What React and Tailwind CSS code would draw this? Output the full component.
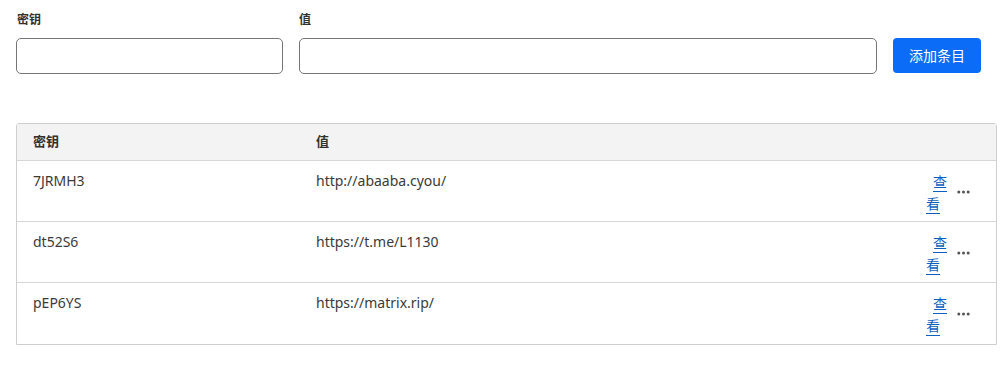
import React from 'react';

const rows = [
  { key: '7JRMH3', value: 'http://abaaba.cyou/' },
  { key: 'dt52S6', value: 'https://t.me/L1130' },
  { key: 'pEP6YS', value: 'https://matrix.rip/' },
];

const font = { fontFamily: '"Noto Sans", "Noto Sans CJK SC", sans-serif' };

function MoreIcon() {
  return (
    <svg width="13" height="4" viewBox="0 0 13 4" className="fill-[#555]">
      <circle cx="1.8" cy="2" r="1.5" />
      <circle cx="6.5" cy="2" r="1.5" />
      <circle cx="11.2" cy="2" r="1.5" />
    </svg>
  );
}

function App() {
  return (
    <div className="bg-white w-[1001px] h-[380px] text-[#323130]" style={font}>
      <div className="flex items-end pt-[12px] pl-[16px]">
        <div className="flex flex-col w-[267px]">
          <label className="text-[12px] font-semibold leading-[16px] mb-[10px] pl-px">密钥</label>
          <input className="h-[36px] border border-[#767676] rounded-[5px] px-2 outline-none" />
        </div>
        <div className="flex flex-col w-[578px] ml-[16px]">
          <label className="text-[12px] font-semibold leading-[16px] mb-[10px]">值</label>
          <input className="h-[36px] border border-[#767676] rounded-[5px] px-2 outline-none" />
        </div>
        <button className="ml-[16px] h-[35px] w-[88px] mb-px bg-[#0b6cf7] text-white text-[14px] rounded-[4px]">
          添加条目
        </button>
      </div>

      <div className="mt-[49px] ml-[16px] w-[981px] border border-[#cfcfcf] rounded-t-[3px]">
        <div className="flex h-[37px] items-center bg-[#f3f3f3] border-b border-[#d6d6d6] text-[13px] font-semibold">
          <div className="w-[283px] pl-[16px]">密钥</div>
          <div className="flex-1 pl-[16px]">值</div>
        </div>
        {rows.map((r, i) => (
          <div
            key={r.key}
            className={`flex h-[61px] text-[14px] text-[#3b3a39] ${i < rows.length - 1 ? 'border-b border-[#d6d6d6]' : ''}`}
          >
            <div className="w-[283px] pl-[16px] pt-[9px]">{r.key}</div>
            <div className="flex-1 pl-[16px] pt-[9px]">{r.value}</div>
            <div className="flex items-start pt-[10px] pr-[26px]">
              <a href="#" className="flex flex-col text-[#0f5fc0] text-[14px] leading-[22px]">
                <span className="underline underline-offset-[4px] pl-[7px]">查</span>
                <span className="underline underline-offset-[4px]">看</span>
              </a>
              <span className="ml-[10px] mt-[19px]">
                <MoreIcon />
              </span>
            </div>
          </div>
        ))}
      </div>
    </div>
  );
}

export default App;
